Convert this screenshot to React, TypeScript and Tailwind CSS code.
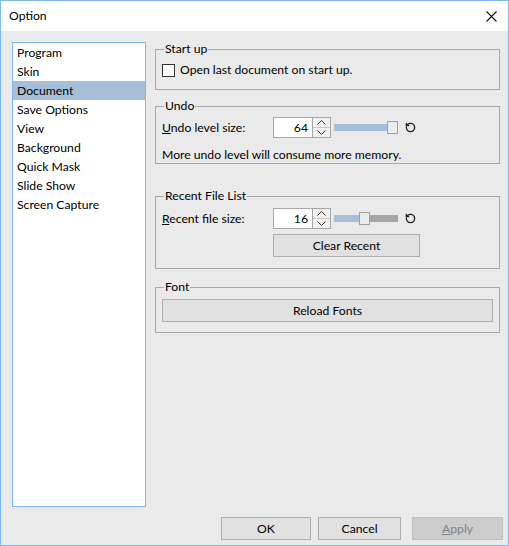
import { RotateCcw } from "lucide-react";

const pages = ["Program", "Skin", "Document", "Save Options", "View", "Background", "Quick Mask", "Slide Show", "Screen Capture"];

function Spin({ value }: { value: number }) {
  return (
    <div className="flex h-[21px]">
      <div className="flex w-[40px] items-center justify-end border border-[#a8a8a8] bg-white pr-[4px]">{value}</div>
      <div className="flex w-[18px] flex-col border border-l-0 border-[#a8a8a8] bg-[#f0f0f0]">
        <div className="flex flex-1 items-center justify-center border-b border-[#c8c8c8]">
          <svg width="9" height="5" viewBox="0 0 9 5" fill="none" stroke="#333" strokeWidth="1">
            <path d="M0.5 4.5 L4.5 0.5 L8.5 4.5" />
          </svg>
        </div>
        <div className="flex flex-1 items-center justify-center">
          <svg width="9" height="5" viewBox="0 0 9 5" fill="none" stroke="#333" strokeWidth="1">
            <path d="M0.5 0.5 L4.5 4.5 L8.5 0.5" />
          </svg>
        </div>
      </div>
    </div>
  );
}

function Slider({ pos }: { pos: number }) {
  // pos = px of blue part before thumb, track 64px total
  return (
    <div className="ml-[3px] flex h-[13px] w-[64px] items-center">
      <div className="h-[7px] bg-[#a6bfd9]" style={{ width: pos }} />
      <div className="h-[13px] w-[11px] border border-[#a0a0a0] bg-[#ececec]" />
      <div className="h-[7px] flex-1 bg-[#a6a6a6]" />
    </div>
  );
}

function Reset() {
  return <RotateCcw className="ml-[7px] text-[#222]" size={11} strokeWidth={3} />;
}

export default function App() {
  return (
    <div className="flex h-[546px] w-[509px] flex-col border border-[#7db8f0] font-['Lato',sans-serif] text-[12.2px] leading-[16px] text-black">
      {/* title bar */}
      <div className="flex h-[30px] items-center justify-between bg-white pl-[8px] pr-[11px]">
        <span>Option</span>
        <svg width="11" height="11" viewBox="0 0 11 11" stroke="#111" strokeWidth="1.1">
          <path d="M0.5 0.5 L10.5 10.5 M10.5 0.5 L0.5 10.5" />
        </svg>
      </div>

      <div className="flex flex-1 flex-col bg-[#eaeaea]">
        <div className="flex px-[11px] pt-[10px]">
          {/* page list */}
          <div className="mt-[1px] h-[465px] w-[134px] shrink-0 border border-[#7db8f0] bg-white">
            {pages.map((p) => (
              <div key={p} className={`flex h-[19px] items-center pl-[4px] ${p === "Document" ? "bg-[#a5bfd9]" : ""}`}>
                {p}
              </div>
            ))}
          </div>

          {/* settings */}
          <div className="ml-[9px] flex w-[345px] shrink-0 flex-col">
            <fieldset className="border border-[#a9a9a9] px-[6px] pb-[11px] pt-[5px]">
              <legend className="ml-[2px] px-[1px]">Start up</legend>
              <label className="flex h-[16px] items-center">
                <span className="h-[13px] w-[13px] border border-[#333] bg-white" />
                <span className="ml-[5px]">Open last document on start up.</span>
              </label>
            </fieldset>

            <fieldset className="mt-[8px] border border-[#a9a9a9] px-[6px] pt-[3px]">
              <legend className="ml-[2px] px-[1px]">Undo</legend>
              <div className="flex items-center">
                <span className="w-[111px]">
                  <span className="underline">U</span>ndo level size:
                </span>
                <Spin value={64} />
                <Slider pos={53} />
                <Reset />
              </div>
              <div className="mt-[9px]">More undo level will consume more memory.</div>
            </fieldset>

            <fieldset className="mt-[24px] border border-[#a9a9a9] px-[6px] pb-[11px] pt-[4px]">
              <legend className="ml-[2px] px-[1px]">Recent File List</legend>
              <div className="flex items-center">
                <span className="w-[111px]">
                  <span className="underline">R</span>ecent file size:
                </span>
                <Spin value={16} />
                <Slider pos={25} />
                <Reset />
              </div>
              <button className="ml-[111px] mt-[5px] flex h-[23px] w-[147px] items-center justify-center border border-[#adadad] bg-[#e1e1e1]">
                Clear Recent
              </button>
            </fieldset>

            <fieldset className="mt-[10px] border border-[#a9a9a9] px-[6px] pb-[10px] pt-[4px]">
              <legend className="ml-[2px] px-[1px]">Font</legend>
              <button className="flex h-[23px] w-full items-center justify-center border border-[#adadad] bg-[#e1e1e1]">
                Reload Fonts
              </button>
            </fieldset>
          </div>
        </div>

        {/* dialog buttons */}
        <div className="mt-[10px] flex justify-end pr-[5px]">
          <button className="flex h-[23px] w-[90px] items-center justify-center border border-[#adadad] bg-[#e1e1e1]">OK</button>
          <button className="ml-[7px] flex h-[23px] w-[83px] items-center justify-center border border-[#adadad] bg-[#e1e1e1]">Cancel</button>
          <button className="ml-[11px] flex h-[23px] w-[91px] items-center justify-center border border-[#bfbfbf] bg-[#cccccc] text-[#838383]">
            <span className="underline">A</span>pply
          </button>
        </div>
      </div>
    </div>
  );
}
